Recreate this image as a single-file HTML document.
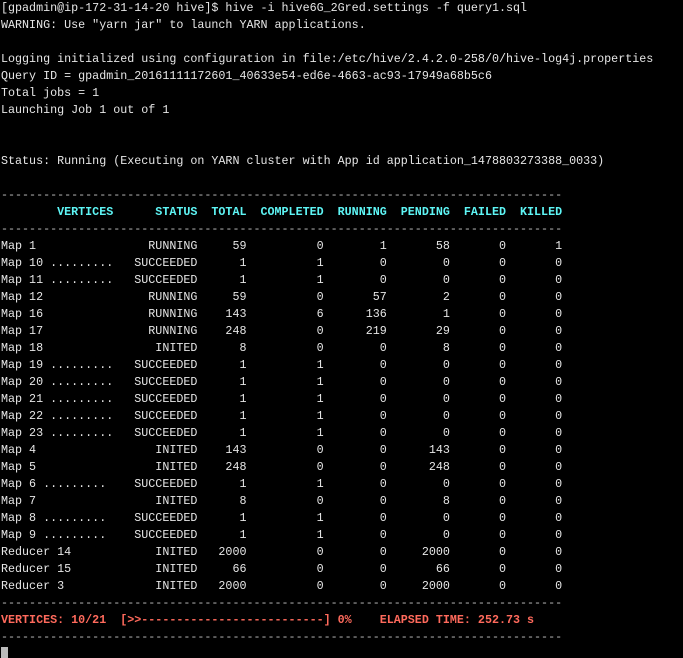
<!DOCTYPE html>
<html><head><meta charset="utf-8"><style>
html,body{margin:0;padding:0;background:#000;width:683px;height:658px;overflow:hidden}
pre{margin:0;padding:0 0 0 1px;font-family:"Liberation Mono",monospace;font-size:11.7px;line-height:17px;color:#e6e6e6;white-space:pre}
.c{color:#5ef5f5;font-weight:bold}
.r{color:#ff6a5c;font-weight:bold}
.d{color:#bbb}
.cur{display:inline-block;width:7px;height:13px;background:#bbb;vertical-align:-3px}
</style></head><body><pre>[gpadmin@ip-172-31-14-20 hive]$ hive -i hive6G_2Gred.settings -f query1.sql
WARNING: Use "yarn jar" to launch YARN applications.

Logging initialized using configuration in file:/etc/hive/2.4.2.0-258/0/hive-log4j.properties
Query ID = gpadmin_20161111172601_40633e54-ed6e-4663-ac93-17949a68b5c6
Total jobs = 1
Launching Job 1 out of 1


Status: Running (Executing on YARN cluster with App id application_1478803273388_0033)

<span class="d">--------------------------------------------------------------------------------</span>
<span class="c">        VERTICES      STATUS  TOTAL  COMPLETED  RUNNING  PENDING  FAILED  KILLED</span>
<span class="d">--------------------------------------------------------------------------------</span>
Map 1                RUNNING     59          0        1       58       0       1
Map 10 .........   SUCCEEDED      1          1        0        0       0       0
Map 11 .........   SUCCEEDED      1          1        0        0       0       0
Map 12               RUNNING     59          0       57        2       0       0
Map 16               RUNNING    143          6      136        1       0       0
Map 17               RUNNING    248          0      219       29       0       0
Map 18                INITED      8          0        0        8       0       0
Map 19 .........   SUCCEEDED      1          1        0        0       0       0
Map 20 .........   SUCCEEDED      1          1        0        0       0       0
Map 21 .........   SUCCEEDED      1          1        0        0       0       0
Map 22 .........   SUCCEEDED      1          1        0        0       0       0
Map 23 .........   SUCCEEDED      1          1        0        0       0       0
Map 4                 INITED    143          0        0      143       0       0
Map 5                 INITED    248          0        0      248       0       0
Map 6 .........    SUCCEEDED      1          1        0        0       0       0
Map 7                 INITED      8          0        0        8       0       0
Map 8 .........    SUCCEEDED      1          1        0        0       0       0
Map 9 .........    SUCCEEDED      1          1        0        0       0       0
Reducer 14            INITED   2000          0        0     2000       0       0
Reducer 15            INITED     66          0        0       66       0       0
Reducer 3             INITED   2000          0        0     2000       0       0
<span class="d">--------------------------------------------------------------------------------</span>
<span class="r">VERTICES: 10/21  [&gt;&gt;--------------------------] 0%    ELAPSED TIME: 252.73 s</span>
<span class="d">--------------------------------------------------------------------------------</span>
<span class="cur"></span></pre></body></html>
